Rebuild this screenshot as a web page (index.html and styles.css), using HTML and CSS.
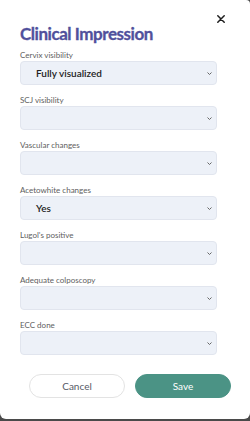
FILE: index.html
```html
<!DOCTYPE html>
<html>
<head>
<meta charset="utf-8">
<link rel="stylesheet" href="styles.css">
</head>
<body>
<div class="card">
  <button class="close" aria-label="Close">
    <svg width="8" height="8" viewBox="0 0 8 8"><path d="M0.8 0.8 L7.2 7.2 M7.2 0.8 L0.8 7.2" stroke="#1e1e1e" stroke-width="1.5" stroke-linecap="round"/></svg>
  </button>
  <h1 class="title">Clinical Impression</h1>
  <div class="fields">
    <div class="field">
      <div class="label">Cervix visibility</div>
      <div class="select"><span class="value">Fully visualized</span><svg class="chev" width="5" height="3" viewBox="0 0 5 3"><path d="M0.5 0.5 L2.5 2.5 L4.5 0.5" fill="none" stroke="#666" stroke-width="1"/></svg></div>
    </div>
    <div class="field">
      <div class="label">SCJ visibility</div>
      <div class="select"><span class="value"></span><svg class="chev" width="5" height="3" viewBox="0 0 5 3"><path d="M0.5 0.5 L2.5 2.5 L4.5 0.5" fill="none" stroke="#666" stroke-width="1"/></svg></div>
    </div>
    <div class="field">
      <div class="label">Vascular changes</div>
      <div class="select"><span class="value"></span><svg class="chev" width="5" height="3" viewBox="0 0 5 3"><path d="M0.5 0.5 L2.5 2.5 L4.5 0.5" fill="none" stroke="#666" stroke-width="1"/></svg></div>
    </div>
    <div class="field">
      <div class="label">Acetowhite changes</div>
      <div class="select"><span class="value">Yes</span><svg class="chev" width="5" height="3" viewBox="0 0 5 3"><path d="M0.5 0.5 L2.5 2.5 L4.5 0.5" fill="none" stroke="#666" stroke-width="1"/></svg></div>
    </div>
    <div class="field">
      <div class="label">Lugol's positive</div>
      <div class="select"><span class="value"></span><svg class="chev" width="5" height="3" viewBox="0 0 5 3"><path d="M0.5 0.5 L2.5 2.5 L4.5 0.5" fill="none" stroke="#666" stroke-width="1"/></svg></div>
    </div>
    <div class="field">
      <div class="label">Adequate colposcopy</div>
      <div class="select"><span class="value"></span><svg class="chev" width="5" height="3" viewBox="0 0 5 3"><path d="M0.5 0.5 L2.5 2.5 L4.5 0.5" fill="none" stroke="#666" stroke-width="1"/></svg></div>
    </div>
    <div class="field">
      <div class="label">ECC done</div>
      <div class="select"><span class="value"></span><svg class="chev" width="5" height="3" viewBox="0 0 5 3"><path d="M0.5 0.5 L2.5 2.5 L4.5 0.5" fill="none" stroke="#666" stroke-width="1"/></svg></div>
    </div>
  </div>
  <div class="actions">
    <button class="btn cancel">Cancel</button>
    <button class="btn save">Save</button>
  </div>
</div>
</body>
</html>
```
FILE: styles.css
```css
* { box-sizing: border-box; }
html, body { margin: 0; padding: 0; }
body {
  background: #4a4a4a;
  width: 250px;
  height: 421px;
  font-family: "Lato", "Open Sans", sans-serif;
}
.card {
  position: relative;
  width: 250px;
  height: 419px;
  background: #ffffff;
  border-radius: 0 4px 6px 6px;
  padding: 22px 0 0 20px;
}
.close {
  position: absolute;
  top: 15px;
  right: 25px;
  width: 8px;
  height: 8px;
  padding: 0;
  border: 0;
  background: none;
  display: flex;
}
.title {
  margin: 0;
  font-size: 17px;
  line-height: 24px;
  font-weight: 700;
  color: #50509c;
  letter-spacing: -0.45px;
  -webkit-text-stroke: 0.3px #50509c;
}
.fields {
  margin-top: 4px;
  display: flex;
  flex-direction: column;
  gap: 10px;
}
.field {
  display: flex;
  flex-direction: column;
}
.label {
  font-size: 8px;
  line-height: 11px;
  color: #5e5e5e;
}
.select {
  width: 197px;
  height: 24px;
  background: #edf1f8;
  border: 1px solid #e1e5ee;
  border-radius: 4px;
  display: flex;
  align-items: center;
  justify-content: space-between;
  padding: 0 4px 0 15px;
}
.value {
  font-size: 10px;
  font-weight: 600;
  color: #222222;
}
.chev { display: block; margin-top: 1px; }
.actions {
  margin-top: 19px;
  padding-left: 9px;
  display: flex;
  gap: 10px;
}
.btn {
  width: 96px;
  height: 24px;
  border-radius: 12px;
  font-family: "Lato", "Open Sans", sans-serif;
  font-size: 10px;
  padding: 0;
}
.cancel {
  background: #ffffff;
  border: 1px solid #e3e3e3;
  color: #555a66;
}
.save {
  background: #4b9385;
  border: 1px solid #4b9385;
  color: #ffffff;
}
```
